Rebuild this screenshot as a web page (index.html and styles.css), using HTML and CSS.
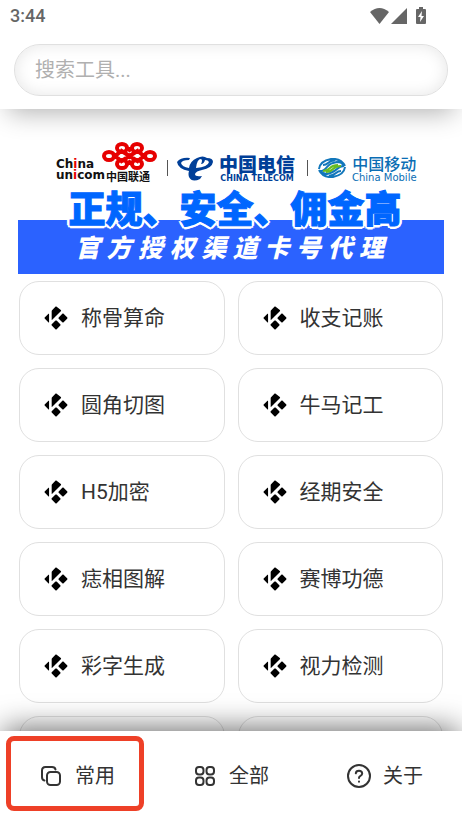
FILE: index.html
```html
<!DOCTYPE html>
<html lang="zh-CN">
<head>
<meta charset="utf-8">
<meta name="viewport" content="width=device-width, initial-scale=1">
<title>工具箱</title>
<link rel="stylesheet" href="styles.css">
</head>
<body>
<svg class="defs" aria-hidden="true">
  <symbol id="kodi" viewBox="-0.5 -0.5 25 25">
    <path d="M12.03.05c-.23 0-.45.1-.67.32L7.9 3.83c-.31.27-.4.59-.4.99v8.56c0 .11 0 .22.03.33.09.33.31.39.55.15l8.37-8.39 .6-.6c.43-.43.43-.9 0-1.33L12.7.37c-.22-.22-.44-.32-.67-.32zM19.25 7.28c-.22 0-.44.1-.65.31l-3.78 3.78c-.43.43-.43.9 0 1.32l3.76 3.77c.44.44.91.44 1.35 0l3.64-3.65c.57-.57.57-1 0-1.56l-3.67-3.66c-.2-.21-.43-.31-.65-.31zM4.18 7.6L.2 11.57c-.28.29-.28.68 0 .96l4.05 4.06c.26.26.53.14.53-.23V7.98c0-.3-.3-.5-.6-.38zM11.92 14.49c-.23 0-.47.11-.7.34l-3.66 3.67c-.42.41-.42.89 0 1.3l3.81 3.82c.43.44.9.44 1.34 0l3.77-3.78c.48-.47.48-.9 0-1.38l-3.59-3.59c-.27-.27-.46-.38-.97-.38z"/>
  </symbol>
</svg>

<header class="top">
  <div class="status">
    <span class="clock">3:44</span>
    <svg class="status-icons" viewBox="0 0 58 18" aria-hidden="true">
      <path d="M0 5Q9.500-3 19 5L9.500 17z"/>
      <path d="M37 1v16H21z"/>
      <path d="M49 0h4v2h2q1 0 1 1v13q0 1-1 1h-8q-1 0-1-1V3q0-1 1-1h2z"/>
      <path class="bolt" d="M52 4l-4 6h2.500l-.5 5 4-6h-2.500z"/>
    </svg>
  </div>
  <input class="search" type="search" placeholder="搜索工具..." aria-label="搜索工具">
</header>

<main class="content">
  <a class="banner" href="#">
    <span class="brands">
      <span class="brand unicom">
        <span class="unicom-name"><span>Ch<i>i</i>na</span><span>un<i>i</i>com</span></span>
        <span class="unicom-side">
          <svg class="knot" viewBox="0 0 56 28" aria-hidden="true">
            <ellipse cx="7" cy="14" rx="5" ry="4"/>
            <ellipse cx="48" cy="14" rx="5" ry="4"/>
            <ellipse cx="20" cy="6" rx="5" ry="4"/>
            <ellipse cx="35" cy="6" rx="5" ry="4"/>
            <ellipse cx="20" cy="22" rx="5" ry="4"/>
            <ellipse cx="35" cy="22" rx="5" ry="4"/>
            <path d="M11 12L19 19M11 16L19 9M44 12L36 19M44 16L36 9M18 8L37 20M37 8L18 20M25 6L27.500 8L30 6M25 22L27.500 20L30 22"/>
          </svg>
          <span class="unicom-cn">中国联通</span>
        </span>
      </span>
      <span class="brand telecom">
        <svg class="swirl" viewBox="0 0 36 25" aria-hidden="true">
          <path d="M0 6Q4 1 13 2L12 4Q5 4 4 7 5 11 12 12 13 5 20 2 26-1 30 2 36 2 36 6 35 12 25 14 19 15 18 18 18 21 25 20L23 23Q15 27 12 21 11 18 12 15 1 13 0 6zM19 12Q31 11 32 6 31 4 28 4 27 8 24 8 26 4 24 3 20 3 19 12z"/>
        </svg>
        <span class="telecom-name"><b>中国电信</b><small>CHINA TELECOM</small></span>
      </span>
      <span class="brand mobile">
        <svg class="waves" viewBox="0 0 28 20" aria-hidden="true">
          <path d="M1 11Q2 3 13 1 23 0 27 8M2 13Q6 13 9 9T19 4Q24 4 26 8M27 9Q26 17 15 19 5 20 1 12M26 8Q22 8 19 11T9 16Q5 16 2 13M5 7Q8 7 10 5T17 2M23 13Q20 13 18 15T11 18"/>
          <path class="green" d="M5 13Q9 13 12 10T20 7M8 14Q12 14 15 11T23 8"/>
        </svg>
        <span class="mobile-name"><b>中国移动</b><small>China Mobile</small></span>
      </span>
    </span>
    <strong class="headline">正规、安全、佣金高</strong>
    <span class="strip"><em>官方授权渠道卡号代理</em></span>
  </a>

  <div class="grid">
    <button class="card" type="button"><svg><use href="#kodi"/></svg>称骨算命</button>
    <button class="card" type="button"><svg><use href="#kodi"/></svg>收支记账</button>
    <button class="card" type="button"><svg><use href="#kodi"/></svg>圆角切图</button>
    <button class="card" type="button"><svg><use href="#kodi"/></svg>牛马记工</button>
    <button class="card" type="button"><svg><use href="#kodi"/></svg>H5加密</button>
    <button class="card" type="button"><svg><use href="#kodi"/></svg>经期安全</button>
    <button class="card" type="button"><svg><use href="#kodi"/></svg>痣相图解</button>
    <button class="card" type="button"><svg><use href="#kodi"/></svg>赛博功德</button>
    <button class="card" type="button"><svg><use href="#kodi"/></svg>彩字生成</button>
    <button class="card" type="button"><svg><use href="#kodi"/></svg>视力检测</button>
    <button class="card" type="button"></button>
    <button class="card" type="button"></button>
  </div>
</main>

<nav class="tabs">
  <button class="tab active" type="button">
    <svg viewBox="0 0 24 24" aria-hidden="true"><rect x="8" y="8" width="13" height="13" rx="3.500"/><path d="M5.500 16.500Q3 16 3 13V6.500Q3 3 6.500 3H13Q16 3 16.500 5.500"/></svg>
    常用
  </button>
  <button class="tab" type="button">
    <svg viewBox="0 0 24 24" aria-hidden="true"><rect x="3" y="3" width="7.500" height="7.500" rx="3"/><rect x="13.500" y="3" width="7.500" height="7.500" rx="3"/><rect x="3" y="13.500" width="7.500" height="7.500" rx="3"/><rect x="13.500" y="13.500" width="7.500" height="7.500" rx="3"/></svg>
    全部
  </button>
  <button class="tab" type="button">
    <svg viewBox="0 0 24 24" aria-hidden="true"><circle cx="12" cy="12" r="11"/><path d="M8.800 9.300Q9 6.800 12 6.800T15.200 9.500Q15.200 11 13.500 11.800 12 12.500 12 14M12 17.500v.2"/></svg>
    关于
  </button>
</nav>
</body>
</html>
```

FILE: styles.css
```css
* {
  box-sizing: border-box;
}

body {
  margin: 0;
  height: 100vh;
  display: flex;
  flex-direction: column;
  overflow: hidden;
  background: #fff;
  color: #333;
  font-family: Roboto, "Noto Sans CJK SC", sans-serif;
}

button,
input {
  font: inherit;
  color: inherit;
}

.defs {
  position: absolute;
  width: 0;
  height: 0;
}

/* Header */
.top {
  position: relative;
  z-index: 1;
  padding: 0 14px 13px;
  background: #fff;
  box-shadow: 0 12px 24px -8px rgba(0, 0, 0, 0.3);
}

.status {
  height: 44px;
  padding: 7px 20px 0 0;
  display: flex;
  justify-content: space-between;
}

.clock {
  margin-left: -4px;
  font-size: 18px;
  line-height: 18px;
  font-weight: 500;
  color: #666;
}

.status-icons {
  width: 58px;
  height: 18px;
  fill: #666;
}

.status-icons .bolt {
  fill: #fff;
}

.search {
  display: block;
  width: 100%;
  height: 52px;
  padding: 0 20px;
  border: 1px solid #e0e0e0;
  border-radius: 26px;
  outline: 0;
  appearance: none;
  background: #fff;
  box-shadow: inset 0 0 16px rgba(0, 0, 0, 0.1);
  font-size: 20px;
}

.search::placeholder {
  color: #b0b0b0;
  opacity: 1;
}

/* Scrolling content */
.content {
  flex: 1;
  min-height: 0;
  overflow: hidden;
  padding: 18px 18px 0;
}

.banner {
  display: flex;
  flex-direction: column;
  align-items: stretch;
  text-decoration: none;
  text-align: center;
}

.brands {
  height: 60px;
  padding: 15px 0 0 38px;
  display: flex;
  align-items: flex-start;
}

.brand {
  display: flex;
  flex-shrink: 0;
  height: 42px;
}

.brand small,
.brand b {
  display: block;
  white-space: nowrap;
}

.unicom {
  width: 111px;
}

.unicom-name {
  width: 50px;
  padding-top: 17px;
  font: 700 12px/11px "DejaVu Sans", sans-serif;
  color: #111;
  text-align: left;
}

.unicom-name span {
  display: block;
}

.unicom-name i {
  font-style: normal;
  color: #e60000;
}

.knot {
  display: block;
  width: 56px;
  height: 28px;
  margin-left: -4px;
  fill: none;
  stroke: #e60000;
  stroke-width: 4;
}

.unicom-cn {
  display: block;
  font: 700 11px/12px "Noto Sans CJK SC", sans-serif;
  color: #111;
  text-align: left;
}

.telecom,
.mobile {
  align-items: center;
  gap: 6px;
  height: 16px;
  margin-top: 18px;
  padding-left: 9px;
  border-left: 1px solid #555;
}

.telecom {
  color: #003f98;
}

.swirl {
  width: 36px;
  height: 25px;
  fill: #003f98;
}

.telecom-name b {
  font: 900 19px/20px "Noto Sans CJK SC", sans-serif;
}

.telecom-name small {
  font: 700 8px/9px "DejaVu Sans", sans-serif;
}

.mobile {
  margin-left: 12px;
  padding-left: 10px;
  color: #0a6db4;
}

.waves {
  width: 28px;
  height: 20px;
  fill: none;
  stroke: #1277bb;
  stroke-width: 2;
}

.waves .green {
  stroke: #6b2;
}

.mobile-name b {
  font: 500 16px/18px "Noto Sans CJK SC", sans-serif;
}

.mobile-name small {
  font: 10px/11px "DejaVu Sans", sans-serif;
}

.headline {
  position: relative;
  padding-left: 8px;
  font: 900 37px/40px "Noto Sans CJK SC", sans-serif;
  color: #0066ff;
  white-space: nowrap;
  -webkit-text-stroke: 1px #0066ff;
  text-shadow: 2px 0 #fff, -2px 0 #fff, 0 2px #fff, 0 -2px #fff,
    2px 2px #fff, -2px 2px #fff, 2px -2px #fff, -2px -2px #fff,
    3px 0 #fff, -3px 0 #fff, 0 3px #fff;
}

.strip {
  height: 54px;
  margin-top: -7px;
  padding: 10px 60px 0 57px;
  background: #2b62ff;
  color: #fff;
}

.strip em {
  display: block;
  font: italic 900 25px/32px "Noto Sans CJK SC", sans-serif;
  text-align-last: justify;
}

.grid {
  display: grid;
  grid-template-columns: 1fr 1fr;
  gap: 13px;
  padding: 7px 1px 0;
}

.card {
  height: 74px;
  padding: 0 24px;
  display: flex;
  align-items: center;
  gap: 13px;
  border: 1px solid #e0e0e0;
  border-radius: 20px;
  background: #fff;
  font-size: 21px;
  line-height: 24px;
}

.card svg {
  width: 24px;
  height: 24px;
  fill: #000;
}

/* Bottom tabs */
.tabs {
  position: relative;
  z-index: 1;
  height: 90px;
  display: grid;
  grid-template-columns: repeat(3, 1fr);
  background: #fff;
  box-shadow: 0 -6px 30px -4px rgba(0, 0, 0, 0.6);
}

.tab {
  position: relative;
  display: flex;
  align-items: center;
  justify-content: center;
  gap: 12px;
  padding: 0;
  border: 0;
  background: none;
  font-size: 20px;
  line-height: 24px;
}

.tab svg {
  width: 24px;
  height: 24px;
  fill: none;
  stroke: #333;
  stroke-width: 2;
  stroke-linecap: round;
}

.tab.active::after {
  content: "";
  position: absolute;
  inset: 5px 10px 10px 6px;
  border: 5px solid #ee4027;
  border-radius: 8px;
}
```
